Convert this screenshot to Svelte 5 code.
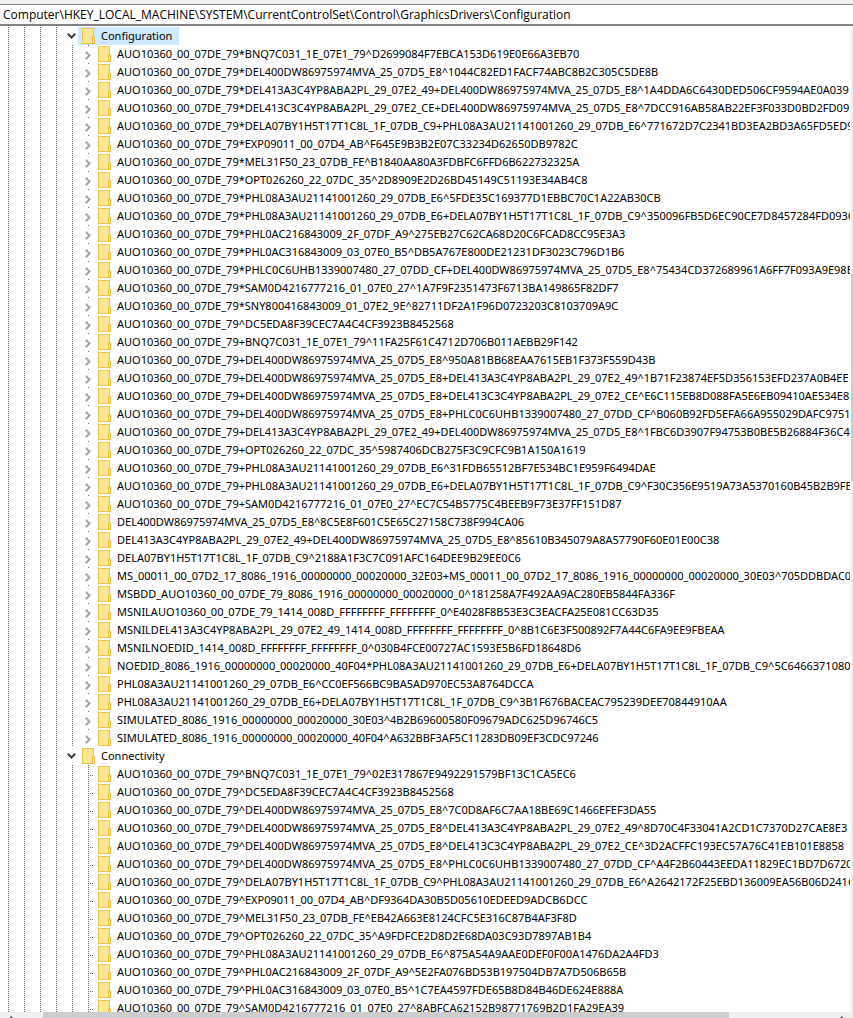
<script lang="ts">
  let path = $state('Computer\\HKEY_LOCAL_MACHINE\\SYSTEM\\CurrentControlSet\\Control\\GraphicsDrivers\\Configuration')

  interface Branch {
    name: string
    expandable: boolean
    keys: string[]
  }

  const branches: Branch[] = [
    {
      name: 'Configuration',
      expandable: true,
      keys: [
        'AUO10360_00_07DE_79*BNQ7C031_1E_07E1_79^D2699084F7EBCA153D619E0E66A3EB70',
        'AUO10360_00_07DE_79*DEL400DW86975974MVA_25_07D5_E8^1044C82ED1FACF74ABC8B2C305C5DE8B',
        'AUO10360_00_07DE_79*DEL413A3C4YP8ABA2PL_29_07E2_49+DEL400DW86975974MVA_25_07D5_E8^1A4DDA6C6430DED506CF9594AE0A039',
        'AUO10360_00_07DE_79*DEL413C3C4YP8ABA2PL_29_07E2_CE+DEL400DW86975974MVA_25_07D5_E8^7DCC916AB58AB22EF3F033D0BD2FD09',
        'AUO10360_00_07DE_79*DELA07BY1H5T17T1C8L_1F_07DB_C9+PHL08A3AU21141001260_29_07DB_E6^771672D7C2341BD3EA2BD3A65FD5ED9',
        'AUO10360_00_07DE_79*EXP09011_00_07D4_AB^F645E9B3B2E07C33234D62650DB9782C',
        'AUO10360_00_07DE_79*MEL31F50_23_07DB_FE^B1840AA80A3FDBFC6FFD6B622732325A',
        'AUO10360_00_07DE_79*OPT026260_22_07DC_35^2D8909E2D26BD45149C51193E34AB4C8',
        'AUO10360_00_07DE_79*PHL08A3AU21141001260_29_07DB_E6^5FDE35C169377D1EBBC70C1A22AB30CB',
        'AUO10360_00_07DE_79*PHL08A3AU21141001260_29_07DB_E6+DELA07BY1H5T17T1C8L_1F_07DB_C9^350096FB5D6EC90CE7D8457284FD093C',
        'AUO10360_00_07DE_79*PHL0AC216843009_2F_07DF_A9^275EB27C62CA68D20C6FCAD8CC95E3A3',
        'AUO10360_00_07DE_79*PHL0AC316843009_03_07E0_B5^DB5A767E800DE21231DF3023C796D1B6',
        'AUO10360_00_07DE_79*PHLC0C6UHB1339007480_27_07DD_CF+DEL400DW86975974MVA_25_07D5_E8^75434CD372689961A6FF7F093A9E98E',
        'AUO10360_00_07DE_79*SAM0D4216777216_01_07E0_27^1A7F9F2351473F6713BA149865F82DF7',
        'AUO10360_00_07DE_79*SNY800416843009_01_07E2_9E^82711DF2A1F96D0723203C8103709A9C',
        'AUO10360_00_07DE_79^DC5EDA8F39CEC7A4C4CF3923B8452568',
        'AUO10360_00_07DE_79+BNQ7C031_1E_07E1_79^11FA25F61C4712D706B011AEBB29F142',
        'AUO10360_00_07DE_79+DEL400DW86975974MVA_25_07D5_E8^950A81BB68EAA7615EB1F373F559D43B',
        'AUO10360_00_07DE_79+DEL400DW86975974MVA_25_07D5_E8+DEL413A3C4YP8ABA2PL_29_07E2_49^1B71F23874EF5D356153EFD237A0B4EE',
        'AUO10360_00_07DE_79+DEL400DW86975974MVA_25_07D5_E8+DEL413C3C4YP8ABA2PL_29_07E2_CE^E6C115EB8D088FA5E6EB09410AE534E8',
        'AUO10360_00_07DE_79+DEL400DW86975974MVA_25_07D5_E8+PHLC0C6UHB1339007480_27_07DD_CF^B060B92FD5EFA66A955029DAFC9751',
        'AUO10360_00_07DE_79+DEL413A3C4YP8ABA2PL_29_07E2_49+DEL400DW86975974MVA_25_07D5_E8^1FBC6D3907F94753B0BE5B26884F36C4',
        'AUO10360_00_07DE_79+OPT026260_22_07DC_35^5987406DCB275F3C9CFC9B1A150A1619',
        'AUO10360_00_07DE_79+PHL08A3AU21141001260_29_07DB_E6^31FDB65512BF7E534BC1E959F6494DAE',
        'AUO10360_00_07DE_79+PHL08A3AU21141001260_29_07DB_E6+DELA07BY1H5T17T1C8L_1F_07DB_C9^F30C356E9519A73A5370160B45B2B9FE',
        'AUO10360_00_07DE_79+SAM0D4216777216_01_07E0_27^EC7C54B5775C4BEEB9F73E37FF151D87',
        'DEL400DW86975974MVA_25_07D5_E8^8C5E8F601C5E65C27158C738F994CA06',
        'DEL413A3C4YP8ABA2PL_29_07E2_49+DEL400DW86975974MVA_25_07D5_E8^85610B345079A8A57790F60E01E00C38',
        'DELA07BY1H5T17T1C8L_1F_07DB_C9^2188A1F3C7C091AFC164DEE9B29EE0C6',
        'MS_00011_00_07D2_17_8086_1916_00000000_00020000_32E03+MS_00011_00_07D2_17_8086_1916_00000000_00020000_30E03^705DDBDAC01F4',
        'MSBDD_AUO10360_00_07DE_79_8086_1916_00000000_00020000_0^181258A7F492AA9AC280EB5844FA336F',
        'MSNILAUO10360_00_07DE_79_1414_008D_FFFFFFFF_FFFFFFFF_0^E4028F8B53E3C3EACFA25E081CC63D35',
        'MSNILDEL413A3C4YP8ABA2PL_29_07E2_49_1414_008D_FFFFFFFF_FFFFFFFF_0^8B1C6E3F500892F7A44C6FA9EE9FBEAA',
        'MSNILNOEDID_1414_008D_FFFFFFFF_FFFFFFFF_0^030B4FCE00727AC1593E5B6FD18648D6',
        'NOEDID_8086_1916_00000000_00020000_40F04*PHL08A3AU21141001260_29_07DB_E6+DELA07BY1H5T17T1C8L_1F_07DB_C9^5C646637108070',
        'PHL08A3AU21141001260_29_07DB_E6^CC0EF566BC9BA5AD970EC53A8764DCCA',
        'PHL08A3AU21141001260_29_07DB_E6+DELA07BY1H5T17T1C8L_1F_07DB_C9^3B1F676BACEAC795239DEE70844910AA',
        'SIMULATED_8086_1916_00000000_00020000_30E03^4B2B69600580F09679ADC625D96746C5',
        'SIMULATED_8086_1916_00000000_00020000_40F04^A632BBF3AF5C11283DB09EF3CDC97246',
      ],
    },
    {
      name: 'Connectivity',
      expandable: false,
      keys: [
        'AUO10360_00_07DE_79^BNQ7C031_1E_07E1_79^02E317867E9492291579BF13C1CA5EC6',
        'AUO10360_00_07DE_79^DC5EDA8F39CEC7A4C4CF3923B8452568',
        'AUO10360_00_07DE_79^DEL400DW86975974MVA_25_07D5_E8^7C0D8AF6C7AA18BE69C1466EFEF3DA55',
        'AUO10360_00_07DE_79^DEL400DW86975974MVA_25_07D5_E8^DEL413A3C4YP8ABA2PL_29_07E2_49^8D70C4F33041A2CD1C7370D27CAE8E3',
        'AUO10360_00_07DE_79^DEL400DW86975974MVA_25_07D5_E8^DEL413C3C4YP8ABA2PL_29_07E2_CE^3D2ACFFC193EC57A76C41EB101E8858',
        'AUO10360_00_07DE_79^DEL400DW86975974MVA_25_07D5_E8^PHLC0C6UHB1339007480_27_07DD_CF^A4F2B60443EEDA11829EC1BD7D6720',
        'AUO10360_00_07DE_79^DELA07BY1H5T17T1C8L_1F_07DB_C9^PHL08A3AU21141001260_29_07DB_E6^A2642172F25EBD136009EA56B06D241C',
        'AUO10360_00_07DE_79^EXP09011_00_07D4_AB^DF9364DA30B5D05610EDEED9ADCB6DCC',
        'AUO10360_00_07DE_79^MEL31F50_23_07DB_FE^EB42A663E8124CFC5E316C87B4AF3F8D',
        'AUO10360_00_07DE_79^OPT026260_22_07DC_35^A9FDFCE2D8D2E68DA03C93D7897AB1B4',
        'AUO10360_00_07DE_79^PHL08A3AU21141001260_29_07DB_E6^875A54A9AAE0DEF0F00A1476DA2A4FD3',
        'AUO10360_00_07DE_79^PHL0AC216843009_2F_07DF_A9^5E2FA076BD53B197504DB7A7D506B65B',
        'AUO10360_00_07DE_79^PHL0AC316843009_03_07E0_B5^1C7EA4597FDE65B8D84B46DE624E888A',
        'AUO10360_00_07DE_79^SAM0D4216777216_01_07E0_27^8ABFCA62152B98771769B2D1FA29EA39',
      ],
    },
  ]

  let selected = $state('Configuration')
</script>

{#snippet guides(count: number)}
  {#each { length: count } as _}
    <span class="guide"></span>
  {/each}
{/snippet}

{#snippet folder()}
  <svg class="folder" viewBox="0 0 13 16" width="13" height="16" aria-hidden="true">
    <rect x="0.5" y="0.5" width="11" height="15" fill="#ffe694" stroke="#eec64c" />
    <path d="M10.5 15.5v-6.5h2v6.5z" fill="#ffe694" stroke="#e6bb40" />
  </svg>
{/snippet}

<div class="regedit">
  <div class="menu-edge"></div>
  <input class="address" aria-label="Address" bind:value={path} />

  <div class="body">
    <div class="tree" role="tree">
      {#each branches as branch}
        <div class="row" role="treeitem" aria-selected={selected === branch.name}>
          {@render guides(4)}
          <span class="expander">
            <svg class="chevron open" viewBox="0 0 9 6" width="9" height="6" aria-hidden="true">
              <path d="M0.8 0.8l3.7 3.7l3.7-3.7" />
            </svg>
          </span>
          <button class="key" class:selected={selected === branch.name} onclick={() => (selected = branch.name)}>
            {@render folder()}{branch.name}
          </button>
        </div>
        {#each branch.keys as key}
          <div class="row" role="treeitem" aria-selected={selected === key}>
            {@render guides(5)}
            {#if branch.expandable}
              <span class="expander closed">
                <svg class="chevron" viewBox="0 0 6 9" width="6" height="9" aria-hidden="true">
                  <path d="M0.8 0.8l3.7 3.7l-3.7 3.7" />
                </svg>
              </span>
            {:else}
              <span class="leaf"></span>
            {/if}
            <button class="key" class:selected={selected === key} onclick={() => (selected = key)}>
              {@render folder()}{key}
            </button>
          </div>
        {/each}
      {/each}
    </div>
    <div class="vscroll"><div class="vthumb"></div></div>
  </div>

  <div class="hscroll">
    <svg viewBox="0 0 6 9" width="6" height="9" aria-hidden="true"><path d="M5 0.8l-3.7 3.7l3.7 3.7" /></svg>
    <div class="htrack"><div class="hthumb"></div></div>
    <svg viewBox="0 0 6 9" width="6" height="9" aria-hidden="true"><path d="M1 0.8l3.7 3.7l-3.7 3.7" /></svg>
  </div>
</div>

<style>
  .regedit {
    height: 100vh;
    display: flex;
    flex-direction: column;
    overflow: hidden;
    background: #fff;
    color: #000;
    font-family: 'Noto Sans', 'Open Sans', sans-serif;
    font-size: 11px;
  }

  .menu-edge {
    height: 4px;
    flex-shrink: 0;
    background: #f0f0f0;
  }

  .address {
    height: 22px;
    flex-shrink: 0;
    box-sizing: border-box;
    padding: 0 3px;
    border: 0;
    border-top: 1px solid #828287;
    border-bottom: 2px solid #828287;
    outline: 0;
    font-family: 'Open Sans', 'Noto Sans', sans-serif;
    font-size: 12px;
    color: inherit;
  }

  .body {
    display: flex;
    flex: 1;
    min-height: 0;
  }

  .tree {
    flex: 1;
    min-width: 0;
    padding-top: 1px;
    overflow: hidden;
  }

  .row {
    display: flex;
    height: 18px;
  }

  .guide {
    width: 16px;
    flex-shrink: 0;
    background: repeating-linear-gradient(#6b6b6b 0 1px, transparent 1px 2px) 8px 0 / 1px 100% no-repeat;
  }

  .expander,
  .leaf {
    width: 14px;
    flex-shrink: 0;
  }

  .expander {
    display: flex;
    align-items: center;
    justify-content: center;
    box-sizing: border-box;
    padding-left: 1px;
  }

  .closed {
    padding: 2px 0 0 2px;
    background: linear-gradient(#6b6b6b, #6b6b6b) 8px 0 / 1px 1px no-repeat;
  }

  .leaf {
    background:
      repeating-linear-gradient(#6b6b6b 0 1px, transparent 1px 2px) 8px 0 / 1px 100% no-repeat,
      repeating-linear-gradient(90deg, #6b6b6b 0 1px, transparent 1px 2px) 10px 10px / 5px 1px no-repeat;
  }

  .chevron {
    fill: none;
    stroke: #a6a6a6;
    stroke-width: 2;
  }

  .open {
    stroke: #404040;
  }

  .key {
    display: flex;
    align-items: center;
    gap: 6px;
    padding: 0 4px;
    border: 0;
    background: transparent;
    color: inherit;
    font-family: inherit;
    font-size: inherit;
    line-height: 18px;
    white-space: nowrap;
  }

  .selected {
    padding-right: 7px;
    background: #cde8ff;
  }

  .folder {
    flex-shrink: 0;
  }

  .vscroll {
    width: 3px;
    flex-shrink: 0;
    padding-top: 248px;
    box-sizing: border-box;
    border-left: 1px solid #fff;
    background: #f0f0f0;
  }

  .vthumb {
    height: 207px;
    background: #cdcdcd;
  }

  .hscroll {
    display: flex;
    height: 6px;
    flex-shrink: 0;
    padding: 0 7px;
    overflow: hidden;
    background: #f0f0f0;
  }

  .hscroll svg {
    margin-top: 4px;
    flex-shrink: 0;
    fill: none;
    stroke: #505050;
    stroke-width: 2;
  }

  .htrack {
    flex: 1;
    margin: 0 8px 0 30px;
  }

  .hthumb {
    width: 87%;
    height: 17px;
    background: #cdcdcd;
  }
</style>
